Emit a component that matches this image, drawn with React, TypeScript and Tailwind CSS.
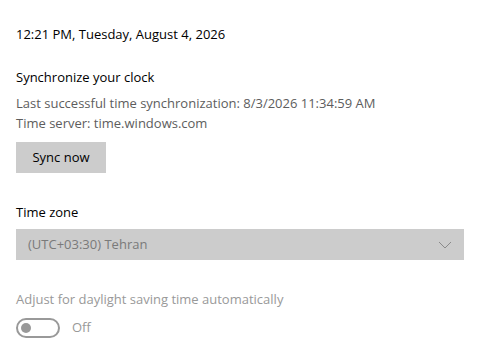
import React from "react";

const font = { fontFamily: '"Segoe UI", "Open Sans", sans-serif' };

function Toggle() {
  return (
    <div className="flex items-center gap-3">
      <div className="w-[44px] h-[20px] rounded-full border-2 border-[#999999] flex items-center px-[3px]">
        <div className="w-[10px] h-[10px] rounded-full bg-[#999999]" />
      </div>
      <span className="text-[#999999] text-[13px]">Off</span>
    </div>
  );
}

export default function App() {
  return (
    <div className="w-[493px] h-[348px] bg-white px-4 pt-[24px] text-[13px]" style={font}>
      <div className="text-black leading-[20px]">12:21 PM, Tuesday, August 4, 2026</div>

      <div className="mt-[23px] text-black leading-[20px]">Synchronize your clock</div>
      <div className="mt-[6px] text-[#5d5d5d] leading-[20px]">
        Last successful time synchronization: 8/3/2026 11:34:59 AM
      </div>
      <div className="text-[#5d5d5d] leading-[20px]">Time server: time.windows.com</div>

      <button className="mt-[9px] w-[90px] h-[31px] bg-[#cccccc] text-black text-[13px]">
        Sync now
      </button>

      <div className="mt-[29px] text-black leading-[20px]">Time zone</div>
      <div className="mt-[7px] w-[448px] h-[31px] bg-[#cccccc] flex items-center justify-between pl-[12px] pr-[12px]">
        <span className="text-[#7a7a7a]">(UTC+03:30) Tehran</span>
        <svg width="14" height="8" viewBox="0 0 14 8" fill="none">
          <path d="M1 1l6 6 6-6" stroke="#8a8a8a" strokeWidth="1" />
        </svg>
      </div>

      <div className="mt-[29px] text-[#999999] leading-[20px]">Adjust for daylight saving time automatically</div>
      <div className="mt-[9px]">
        <Toggle />
      </div>
    </div>
  );
}
